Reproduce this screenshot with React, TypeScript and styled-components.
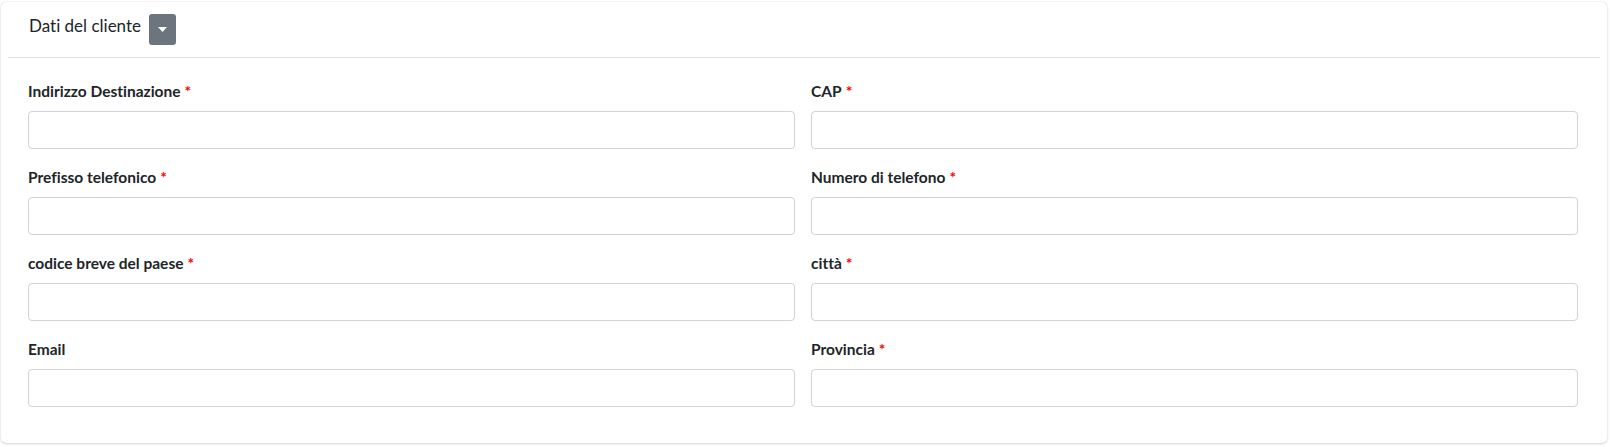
import React from "react";
import styled, { createGlobalStyle } from "styled-components";

const Global = createGlobalStyle`
  html, body { margin: 0; padding: 0; background: #ffffff; }
  body {
    font-family: Lato, "Noto Sans", "Liberation Sans", sans-serif;
    color: #212529;
    font-variant-ligatures: none;
  }
  * { box-sizing: border-box; }
`;

const Page = styled.div`
  padding: 2px 4px 4px 1px;
`;

const Card = styled.section`
  background: #fff;
  border-radius: 5px;
  box-shadow: 0 0 1px rgba(0, 0, 0, 0.2), 0 1px 3px rgba(0, 0, 0, 0.15);
`;

const Header = styled.div`
  margin: 0 7px;
  height: 56px;
  padding-left: 21px;
  display: flex;
  align-items: center;
  gap: 8px;
  border-bottom: 1px solid #dee2e6;
`;

const Title = styled.h3`
  margin: 0 0 9px 0;
  font-size: 17px;
  font-weight: 400;
  color: #212529;
`;

const ToggleButton = styled.button`
  width: 27px;
  height: 31px;
  border: none;
  border-radius: 3px;
  background: #6c757d;
  display: flex;
  align-items: center;
  justify-content: center;
  padding: 0;
  cursor: pointer;
`;

const Body = styled.div`
  padding: 23px 29px 36px 27px;
  display: grid;
  grid-template-columns: 1fr 1fr;
  column-gap: 16px;
  row-gap: 18px;
`;

const Field = styled.div`
  display: flex;
  flex-direction: column;
`;

const Label = styled.label`
  font-size: 15.5px;
  font-weight: 700;
  line-height: 20px;
  margin-bottom: 10px;
  color: #212529;
`;

const Required = styled.span`
  color: #ff0000;
  margin-left: 4px;
`;

const Input = styled.input`
  height: 38px;
  width: 100%;
  border: 1px solid #ced4da;
  border-radius: 4px;
  padding: 6px 12px;
  font-size: 16px;
  font-family: inherit;
  background: #fff;
`;

const fields: { label: string; required: boolean }[] = [
  { label: "Indirizzo Destinazione", required: true },
  { label: "CAP", required: true },
  { label: "Prefisso telefonico", required: true },
  { label: "Numero di telefono", required: true },
  { label: "codice breve del paese", required: true },
  { label: "città", required: true },
  { label: "Email", required: false },
  { label: "Provincia", required: true },
];

export default function App() {
  return (
    <>
      <Global />
      <Page>
        <Card>
          <Header>
            <Title>Dati del cliente</Title>
            <ToggleButton aria-label="toggle">
              <svg width="9" height="5" viewBox="0 0 9 5">
                <path d="M0 0 L9 0 L4.5 5 Z" fill="#fff" />
              </svg>
            </ToggleButton>
          </Header>
          <Body>
            {fields.map((f) => (
              <Field key={f.label}>
                <Label>
                  {f.label}
                  {f.required && <Required>*</Required>}
                </Label>
                <Input type="text" />
              </Field>
            ))}
          </Body>
        </Card>
      </Page>
    </>
  );
}
